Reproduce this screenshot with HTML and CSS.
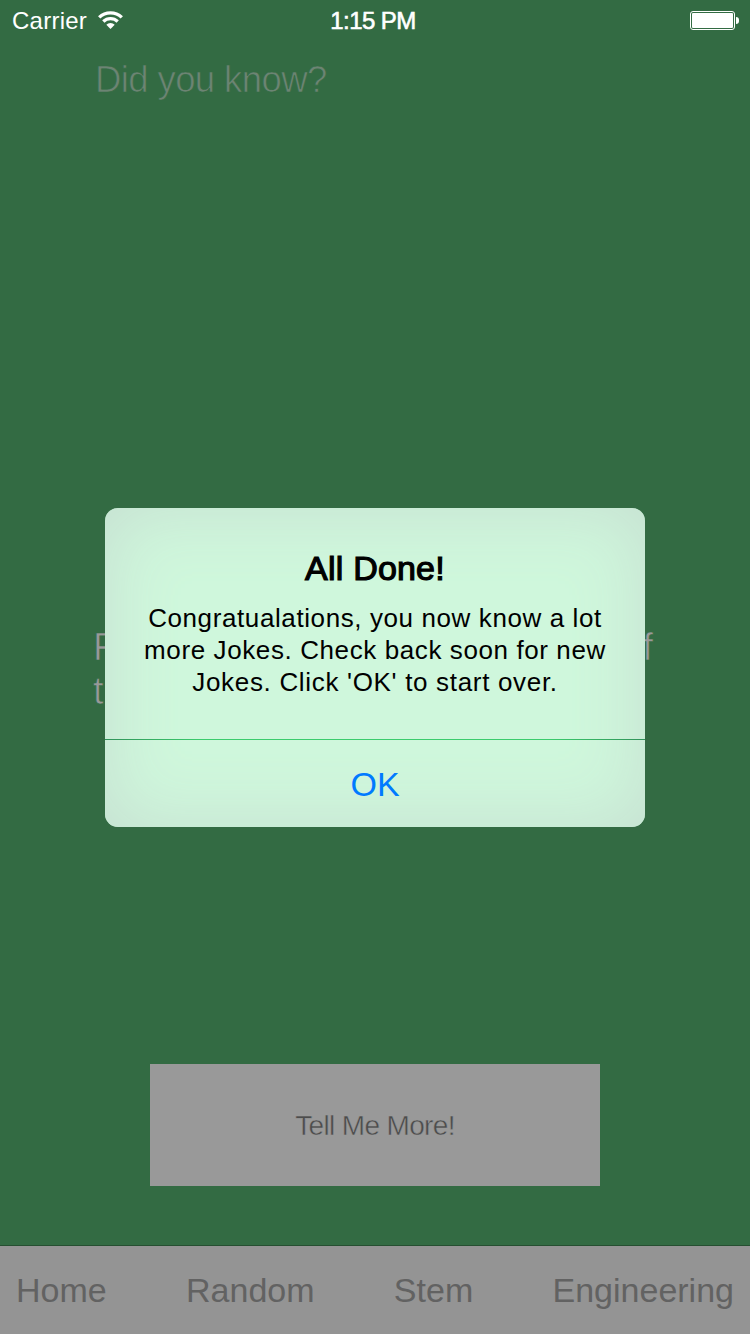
FILE: index.html
```html
<!DOCTYPE html>
<html lang="en">
<head>
<meta charset="utf-8">
<title>Did you know?</title>
<link rel="stylesheet" href="styles.css">
</head>
<body>
<div class="screen">
  <header class="status">
    <div class="status-left">
      <span class="carrier">Carrier</span>
      <svg class="wifi" width="27" height="20" viewBox="0 0 27 20">
        <g fill="none" stroke="#fff" stroke-width="3.3">
          <path d="M2.2 7.4A16.2 16.2 0 0 1 24.8 7.4"/>
          <path d="M6.3 11.5A10.4 10.4 0 0 1 20.7 11.5"/>
        </g>
        <path fill="#fff" d="M13.5 19L9.3 14.7A6 6 0 0 1 17.7 14.7Z"/>
      </svg>
    </div>
    <time class="clock">1:15 PM</time>
    <div class="battery"><div class="battery-body"><div class="battery-level"></div></div><div class="battery-cap"></div></div>
  </header>
  <main class="content">
    <h1 class="heading thin">Did you know?</h1>
    <div class="fact thin">
      <div class="fact-line"><span>F</span><span>f</span></div>
      <div class="fact-line"><span>t</span></div>
    </div>
    <button class="more">Tell Me More!</button>
  </main>
  <nav class="toolbar">
    <a class="tab">Home</a>
    <a class="tab">Random</a>
    <a class="tab">Stem</a>
    <a class="tab">Engineering</a>
  </nav>
  <section class="alert">
    <div class="alert-text">
      <h2 class="alert-title">All Done!</h2>
      <p class="alert-message">Congratualations, you now know a lot<br>more Jokes. Check back soon for new<br><span class="last-line">Jokes. Click 'OK' to start over.</span></p>
    </div>
    <div class="separator"></div>
    <button class="ok">OK</button>
  </section>
</div>
</body>
</html>
```
FILE: styles.css
```css
* { box-sizing: border-box; }
body { margin: 0; font-family: "Liberation Sans", Arial, sans-serif; }
h1, h2, p { margin: 0; font-weight: 400; }
button { border: 0; padding: 0; background: none; font-family: inherit; }

.screen { position: relative; display: flex; flex-direction: column; width: 750px; height: 1334px; background: #336b43; overflow: hidden; white-space: nowrap; }

.status { display: grid; grid-template-columns: 1fr auto 1fr; height: 40px; padding: 0 11px 0 12px; color: #fff; font-size: 24px; line-height: 42px; }
.status-left { display: flex; }
.carrier { width: 85px; letter-spacing: 0.25px; }
.wifi { margin-top: 10px; }
.clock { margin-right: 5px; letter-spacing: -0.55px; -webkit-text-stroke: 0.6px #fff; }
.battery { display: flex; justify-content: flex-end; padding-top: 11px; gap: 1px; }
.battery-body { width: 45px; height: 19px; padding: 1px; border: 1px solid #fff; border-radius: 3px; }
.battery-level { height: 15px; background: #fff; border-radius: 1px; }
.battery-cap { width: 3px; height: 7px; margin-top: 6px; background: #fff; border-radius: 0 3px 3px 0; }

.content { display: flex; flex-direction: column; flex: 1; padding: 19px 95px 0; }
.thin { -webkit-text-stroke: 0.7px #336b43; }
.heading { height: 566px; font-size: 36.5px; line-height: 42px; letter-spacing: -0.6px; color: #6c8473; }
.fact { height: 439px; margin: 0 2px 0 -2px; color: #999; font-size: 38px; line-height: 44px; }
.fact-line { display: flex; justify-content: space-between; }
.more { align-self: center; width: 450px; height: 122px; padding-top: 2px; background: #999; color: #4c4c4c; font-size: 28px; letter-spacing: -0.65px; -webkit-text-stroke: 0.5px #999; }

.toolbar { display: flex; justify-content: space-between; height: 89px; padding: 0 16px; border-top: 1px solid #264f31; background: #949494; color: #626262; font-size: 34px; line-height: 88px; }

.alert { position: absolute; left: 105px; top: 508px; width: 540px; height: 319px; border-radius: 13px; background: #cff7dc; box-shadow: inset 0 0 72px #c6dfd1; overflow: hidden; text-align: center; color: #000; }
.alert-text { height: 231px; padding-top: 40px; }
.alert-title { font-size: 34px; line-height: 40px; letter-spacing: 0.2px; -webkit-text-stroke: 1.2px #000; }
.alert-message { padding-top: 14px; font-size: 26px; line-height: 32px; letter-spacing: 0.6px; }
.last-line { letter-spacing: 0.68px; }
.separator { height: 1px; background: linear-gradient(90deg, #31925a, #3bcc6d 18%, #3bcc6d 82%, #31925a); }
.ok { width: 100%; height: 87px; padding-top: 2px; color: #007aff; font-size: 34px; }
```
